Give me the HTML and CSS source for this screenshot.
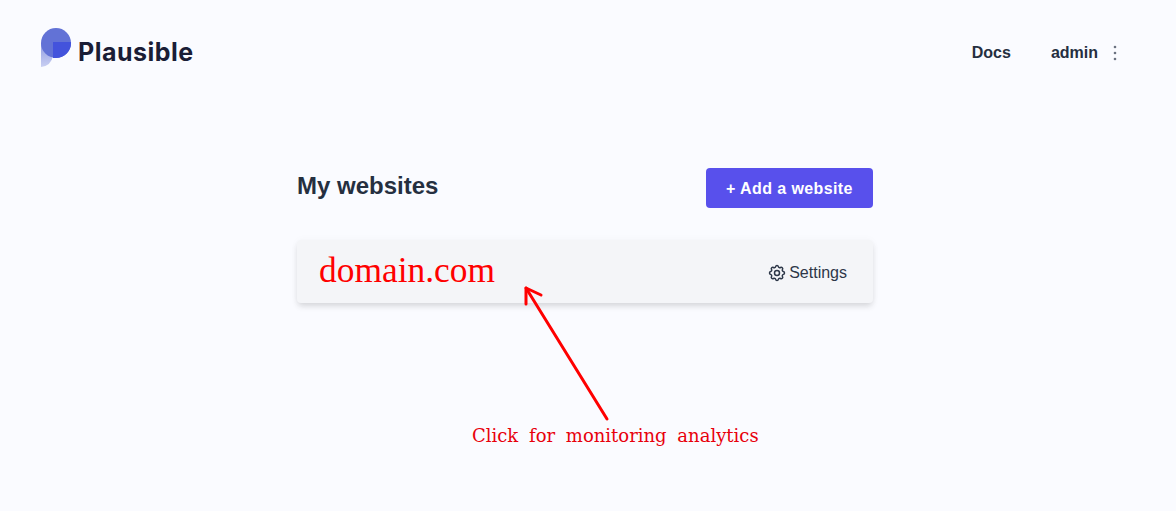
FILE: index.html
```html
<!DOCTYPE html>
<html lang="en">
<head>
  <meta charset="UTF-8" />
  <title>Sites - Plausible</title>
  <link rel="stylesheet" href="styles.css">
</head>
<body>
  <nav class="nav">
    <a class="logo">
      <svg class="logo-mark" width="32" height="42" viewBox="0 0 32 42">
        <defs>
          <linearGradient id="stem" x1="0" y1="0" x2="0" y2="1">
            <stop offset="0" stop-color="#8f9be2"/>
            <stop offset="1" stop-color="#c9cff2"/>
          </linearGradient>
        </defs>
        <path d="M1 16H13V29Q11 39 1 40z" fill="url(#stem)"/>
        <circle cx="16" cy="16" r="15" fill="#6272d6"/>
        <path d="M13 15h18a15 15 0 0 1-15 16h-3z" fill="#4353dc"/>
      </svg>
      <span class="logo-text">Plausible</span>
    </a>
    <div class="nav-links">
      <a class="nav-link">Docs</a>
      <a class="nav-link nav-user">admin
        <svg width="4" height="16" viewBox="0 0 4 16"><circle cx="2" cy="2" r="1.3"/><circle cx="2" cy="8" r="1.3"/><circle cx="2" cy="14" r="1.3"/></svg>
      </a>
    </div>
  </nav>

  <main class="sites">
    <div class="sites-head">
      <h2>My websites</h2>
      <a class="btn">+ Add a website</a>
    </div>
    <div class="site-card">
      <span class="site-domain">domain.com</span>
      <a class="site-settings">
        <svg width="20" height="20" viewBox="0 0 24 24" fill="none" stroke="currentColor" stroke-width="1.8" stroke-linecap="round" stroke-linejoin="round">
          <path d="M10.33 4.32c.43-1.76 2.92-1.76 3.34 0a1.72 1.72 0 0 0 2.57 1.07c1.54-.94 3.3.82 2.36 2.37a1.72 1.72 0 0 0 1.07 2.56c1.75.43 1.75 2.92 0 3.34a1.72 1.72 0 0 0-1.07 2.57c.94 1.54-.82 3.3-2.36 2.36a1.72 1.72 0 0 0-2.57 1.07c-.42 1.75-2.91 1.75-3.34 0a1.72 1.72 0 0 0-2.56-1.07c-1.55.94-3.31-.82-2.37-2.36a1.72 1.72 0 0 0-1.07-2.57c-1.76-.42-1.76-2.91 0-3.34a1.72 1.72 0 0 0 1.07-2.56c-.94-1.55.82-3.31 2.37-2.37 1 .61 2.3.07 2.56-1.07z"/>
          <circle cx="12" cy="12" r="3"/>
        </svg>
        Settings
      </a>
    </div>
  </main>

  <svg class="arrow" width="100" height="150" viewBox="0 0 100 150" fill="none" stroke="#f00" stroke-width="3" stroke-linecap="round" stroke-linejoin="round">
    <path d="M86 136L5 5"/>
    <path d="M5 21L5 5L20 12"/>
  </svg>
  <p class="note">Click for monitoring analytics</p>
</body>
</html>
```

FILE: styles.css
```css
* {
  box-sizing: border-box;
}

body {
  margin: 0;
  height: 511px;
  overflow: hidden;
  position: relative;
  font-family: "Liberation Sans", Arial, sans-serif;
  background: #fafbff;
  color: #252f3f;
}

.nav {
  display: flex;
  justify-content: space-between;
  align-items: center;
  height: 104px;
  padding: 2px 54px 0 40px;
}

.logo {
  display: flex;
  align-items: center;
  gap: 6px;
  margin-top: -11px;
}

.logo-text {
  font-family: "Inter", sans-serif;
  font-size: 25px;
  font-weight: 700;
  color: #1a1d36;
  letter-spacing: 0.5px;
  margin-top: 8px;
}

.nav-links {
  display: flex;
  align-items: center;
  gap: 40px;
  padding-right: 5px;
}

.nav-link {
  font-size: 16px;
  font-weight: 700;
  color: #252f3f;
}

.nav-user {
  display: flex;
  align-items: center;
  gap: 15px;
}

.nav-user svg {
  fill: #6b7280;
}

.sites {
  width: 576px;
  margin: 64px auto 0 297px;
}

.sites-head {
  display: flex;
  justify-content: space-between;
  align-items: center;
}

.sites-head h2 {
  margin: 0 0 4px;
  font-size: 24px;
  font-weight: 700;
  color: #252f3f;
}

.btn {
  display: block;
  width: 167px;
  height: 40px;
  padding-top: 1px;
  line-height: 40px;
  text-align: center;
  background: #5850ec;
  color: #fff;
  border-radius: 4px;
  font-size: 16px;
  font-weight: 700;
  letter-spacing: 0.4px;
}

.site-card {
  display: flex;
  justify-content: space-between;
  align-items: center;
  height: 63px;
  margin-top: 32px;
  padding: 2px 26px 0 22px;
  background: #f4f5f8;
  border-radius: 4px;
  box-shadow: 0 4px 6px -1px rgba(0, 0, 0, 0.14), 0 0 8px rgba(0, 0, 0, 0.03);
}

.site-domain {
  font-family: "Liberation Serif", serif;
  font-size: 35.4px;
  color: #f00;
  margin-top: -6px;
}

.site-settings {
  display: flex;
  align-items: center;
  gap: 2px;
  font-size: 16px;
  color: #2d3748;
}

.arrow {
  position: absolute;
  left: 521px;
  top: 283px;
}

.note {
  position: absolute;
  left: 472px;
  top: 425px;
  margin: 0;
  font-family: "DejaVu Serif", serif;
  font-size: 18px;
  color: #e8000b;
  word-spacing: 5px;
}
```
